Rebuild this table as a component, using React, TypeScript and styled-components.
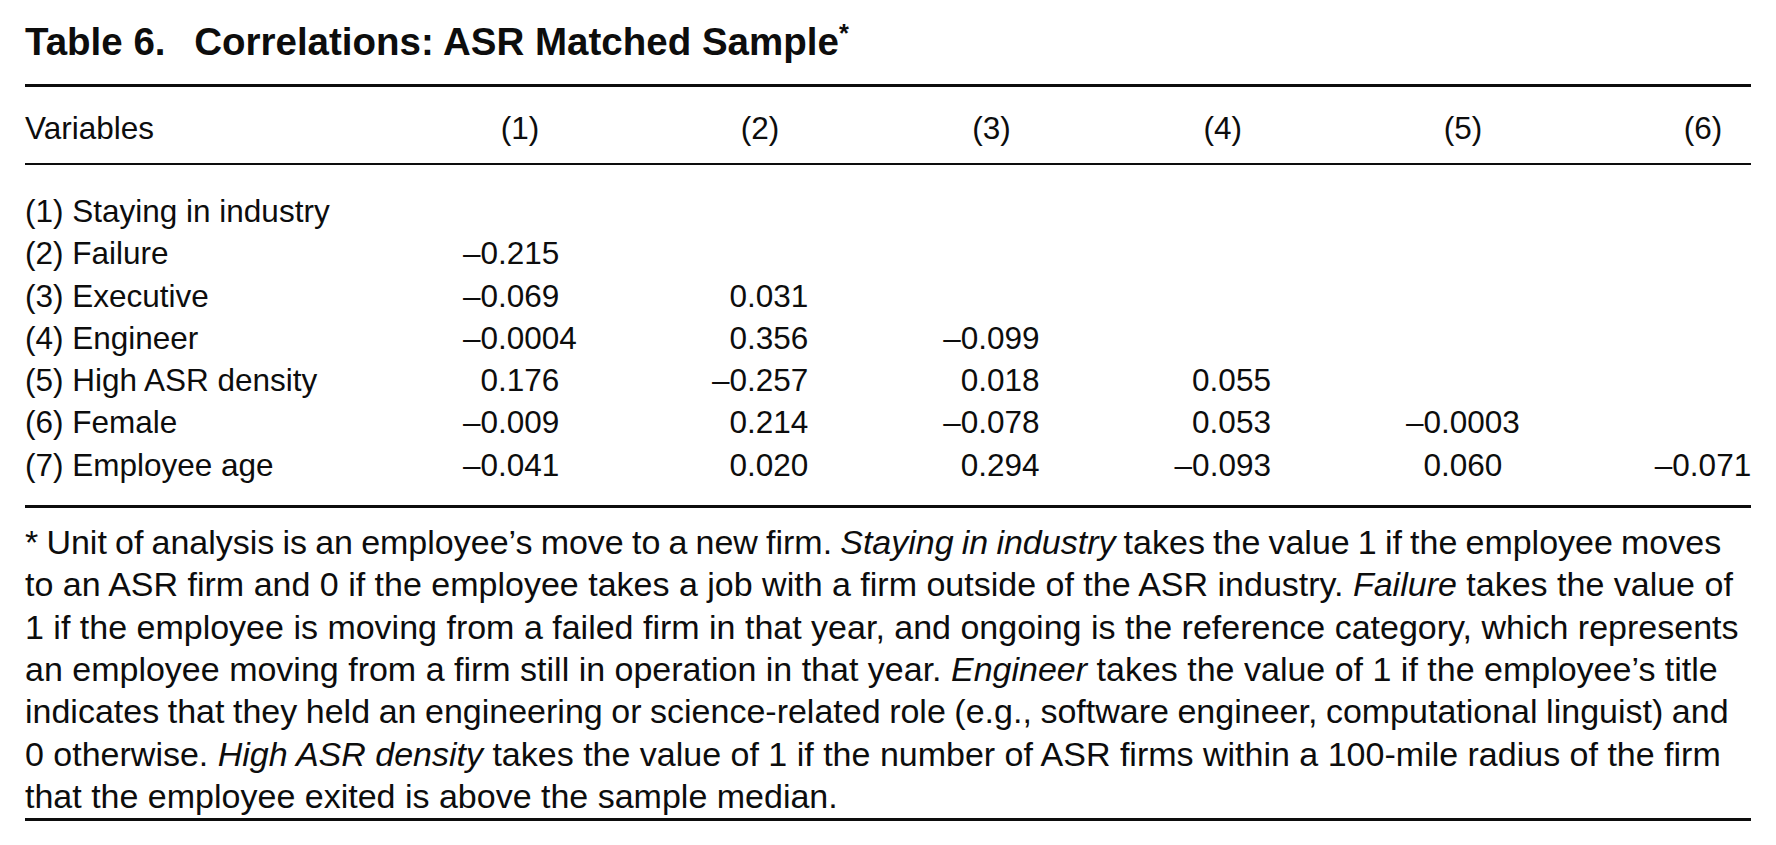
import React from 'react';
import styled, { createGlobalStyle } from 'styled-components';

const GlobalStyle = createGlobalStyle`
  html, body {
    margin: 0;
    padding: 0;
    background: #ffffff;
  }
  body {
    font-family: 'Liberation Sans', Arial, Helvetica, sans-serif;
    color: #0d0d0d;
  }
`;

const Page = styled.div`
  width: 1726px;
  padding: 19px 25px 0 25px;
`;

const Title = styled.h1`
  margin: 0;
  font-size: 38.5px;
  line-height: 46px;
  font-weight: 700;
  white-space: nowrap;
  sup {
    font-size: 0.66em;
    vertical-align: 0.5em;
    line-height: 0;
  }
`;

const TitleLabel = styled.span`
  margin-right: 18px;
`;

const Rule = styled.div<{ thick?: boolean }>`
  height: 0;
  border-top: ${(p) => (p.thick ? 3 : 2)}px solid #0d0d0d;
`;

const TopRule = styled(Rule)`
  margin-top: 19px;
`;

const Table = styled.div`
  display: grid;
  grid-template-columns: 303px repeat(6, max-content);
  column-gap: 135px;
  padding: 20px 0 19px;
  font-size: 31.5px;
  line-height: 42.3px;
  white-space: nowrap;
`;

const HeadCell = styled.div<{ center?: boolean }>`
  grid-row: 1;
  line-height: 42px;
  text-align: ${(p) => (p.center ? 'center' : 'left')};
`;

const HeadRule = styled(Rule)`
  grid-row: 2;
  grid-column: 1 / -1;
  margin: 14px 0 25px;
`;

const Label = styled.div`
  grid-column: 1;
`;

const Num = styled.div<{ col: number; positive?: boolean }>`
  grid-column: ${(p) => p.col + 1};
  padding-left: ${(p) => (p.positive ? '0.556em' : '0')};
  justify-self: start;
`;

const Note = styled.div`
  padding: 13px 0 1px;
  font-size: 34px;
  line-height: 42.3px;
  white-space: nowrap;
  em {
    font-style: italic;
  }
`;

const NoteLine = styled.div<{ tighten?: number }>`
  word-spacing: ${(p) => (p.tighten ? `-${p.tighten}px` : 'normal')};
`;

const rows: { label: string; values: string[] }[] = [
  { label: '(1) Staying in industry', values: [] },
  { label: '(2) Failure', values: ['–0.215'] },
  { label: '(3) Executive', values: ['–0.069', '0.031'] },
  { label: '(4) Engineer', values: ['–0.0004', '0.356', '–0.099'] },
  { label: '(5) High ASR density', values: ['0.176', '–0.257', '0.018', '0.055'] },
  { label: '(6) Female', values: ['–0.009', '0.214', '–0.078', '0.053', '–0.0003'] },
  {
    label: '(7) Employee age',
    values: ['–0.041', '0.020', '0.294', '–0.093', '0.060', '–0.071'],
  },
];

const App = () => {
  return (
    <Page>
      <GlobalStyle />
      <Title>
        <TitleLabel>Table 6.</TitleLabel> Correlations: ASR Matched Sample<sup>*</sup>
      </Title>
      <TopRule thick />
      <Table>
        <HeadCell>Variables</HeadCell>
        {[1, 2, 3, 4, 5, 6].map((n) => (
          <HeadCell center key={n}>
            ({n})
          </HeadCell>
        ))}
        <HeadRule />
        {rows.map((row, r) => (
          <React.Fragment key={row.label}>
            <Label style={{ gridRow: r + 3 }}>{row.label}</Label>
            {row.values.map((v, c) => (
              <Num
                key={c}
                col={c + 1}
                positive={!v.startsWith('–')}
                style={{ gridRow: r + 3 }}
              >
                {v}
              </Num>
            ))}
          </React.Fragment>
        ))}
      </Table>
      <Rule thick />
      <Note>
        <NoteLine tighten={1.3}>
          * Unit of analysis is an employee’s move to a new firm. <em>Staying in industry</em> takes
          the value 1 if the employee moves
        </NoteLine>
        <NoteLine>
          to an ASR firm and 0 if the employee takes a job with a firm outside of the ASR industry.{' '}
          <em>Failure</em> takes the value of
        </NoteLine>
        <NoteLine>
          1 if the employee is moving from a failed firm in that year, and ongoing is the reference
          category, which represents
        </NoteLine>
        <NoteLine>
          an employee moving from a firm still in operation in that year. <em>Engineer</em> takes the
          value of 1 if the employee’s title
        </NoteLine>
        <NoteLine tighten={0.9}>
          indicates that they held an engineering or science-related role (e.g., software engineer,
          computational linguist) and
        </NoteLine>
        <NoteLine>
          0 otherwise. <em>High ASR density</em> takes the value of 1 if the number of ASR firms
          within a 100-mile radius of the firm
        </NoteLine>
        <NoteLine>that the employee exited is above the sample median.</NoteLine>
      </Note>
      <Rule thick />
    </Page>
  );
};

export default App;
